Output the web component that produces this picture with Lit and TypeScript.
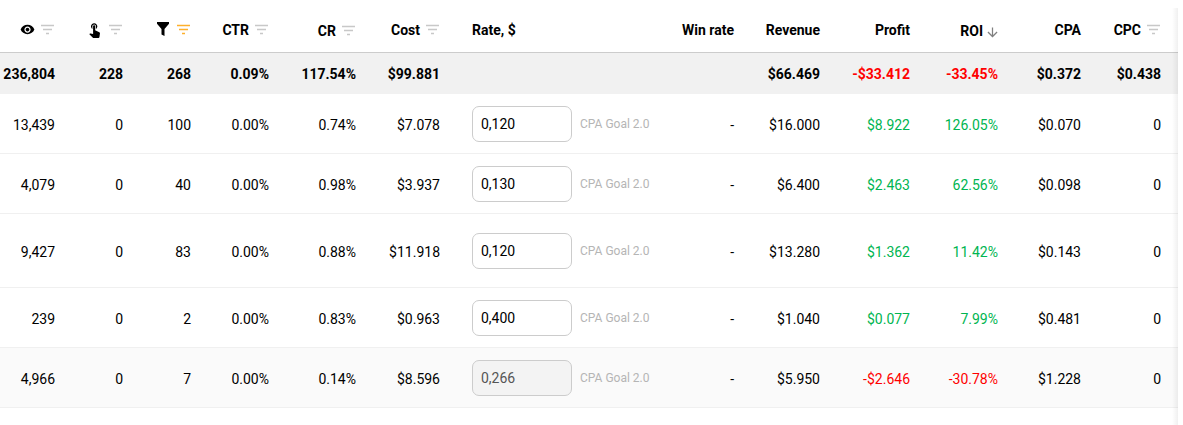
import { LitElement, html, css, svg } from "lit";
import { customElement } from "lit/decorators.js";

const filterIcon = (stroke = "#c8c8c8") => html`<svg class="filter" width="13" height="10" viewBox="0 0 13 10"><path d="M0 .5h13M2 4.5h9M5 8.5h3" fill="none" stroke=${stroke} stroke-width="1.4"/></svg>`;
const mat = (d: string, cls: string, size: number) => html`<svg class=${cls} width=${size} height=${size} viewBox="0 0 24 24">${svg`<path d=${d} fill="currentColor"/>`}</svg>`;
const EYE = "M12 4.5C7 4.5 2.73 7.61 1 12c1.73 4.39 6 7.5 11 7.5s9.27-3.11 11-7.5c-1.73-4.39-6-7.5-11-7.5zM12 17c-2.76 0-5-2.24-5-5s2.24-5 5-5 5 2.24 5 5-2.24 5-5 5zm0-8c-1.66 0-3 1.34-3 3s1.34 3 3 3 3-1.34 3-3-1.34-3-3-3z";
const TOUCH = "M9 11.24V7.5C9 6.12 10.12 5 11.5 5S14 6.12 14 7.5v3.74c1.21-.81 2-2.18 2-3.74C16 5.01 13.99 3 11.5 3S7 5.01 7 7.5c0 1.56.79 2.93 2 3.74zm9.84 4.63l-4.54-2.26c-.17-.07-.35-.11-.54-.11H13v-6c0-.83-.67-1.5-1.5-1.5S10 6.67 10 7.5v10.74l-3.43-.72c-.08-.01-.15-.03-.24-.03-.31 0-.59.13-.79.33l-.79.8 4.94 4.94c.27.27.65.44 1.06.44h6.79c.75 0 1.33-.55 1.44-1.28l.75-5.27c.01-.07.02-.14.02-.2 0-.62-.38-1.16-.91-1.38z";
const ARROW = "M20 12l-1.41-1.41L13 16.17V4h-2v12.17l-5.58-5.59L4 12l8 8 8-8z";
const funnel = html`<svg class="funnel" width="12" height="14" viewBox="0 0 12 14"><path d="M0 0h12v1.8L7.5 7v7L4.5 12.5V7L0 1.8z" fill="currentColor"/></svg>`;

const WIDTHS = [71, 68, 68, 78, 87, 84, 200, 94, 86, 90, 88, 83, 81];

interface Row {
  v: [string, string, string, string, string, string];
  rate: string;
  rev: string;
  profit: string;
  roi: string;
  cpa: string;
  neg?: boolean;
  cls?: string;
}

const ROWS: Row[] = [
  { v: ["13,439", "0", "100", "0.00%", "0.74%", "$7.078"], rate: "0,120", rev: "$16.000", profit: "$8.922", roi: "126.05%", cpa: "$0.070" },
  { v: ["4,079", "0", "40", "0.00%", "0.98%", "$3.937"], rate: "0,130", rev: "$6.400", profit: "$2.463", roi: "62.56%", cpa: "$0.098" },
  { v: ["9,427", "0", "83", "0.00%", "0.88%", "$11.918"], rate: "0,120", rev: "$13.280", profit: "$1.362", roi: "11.42%", cpa: "$0.143", cls: "tall" },
  { v: ["239", "0", "2", "0.00%", "0.83%", "$0.963"], rate: "0,400", rev: "$1.040", profit: "$0.077", roi: "7.99%", cpa: "$0.481" },
  { v: ["4,966", "0", "7", "0.00%", "0.14%", "$8.596"], rate: "0,266", rev: "$5.950", profit: "-$2.646", roi: "-30.78%", cpa: "$1.228", neg: true, cls: "off" },
];

@customElement("app-root")
export class AppRoot extends LitElement {
  static styles = css`
    :host { display: block; width: 1183px; height: 425px; overflow: hidden; background: #fff; font-family: Roboto, "Liberation Sans", sans-serif; font-size: 14px; color: #000; }
    .wrap { width: 1178px; position: relative; }
    .wrap::after { content: ""; position: absolute; top: 8px; bottom: -30px; right: 0; width: 6px; background: linear-gradient(to right, rgba(0,0,0,0), rgba(0,0,0,.06)); }
    table { border-collapse: collapse; table-layout: fixed; width: 1178px; }
    th, td { padding: 0 16px 0 0; text-align: right; white-space: nowrap; box-sizing: border-box; }
    th:last-child, td:last-child { padding-right: 17px; }
    th { height: 52px; font-weight: 700; border-bottom: 1px solid #ccc; padding-top: 9px; line-height: 16px; }
    th.low { padding-top: 11px; }
    .h { display: flex; justify-content: flex-end; align-items: center; gap: 6px; height: 16px; }
    .left { justify-content: flex-start; padding-left: 16px; }
    .gap8 { gap: 8px; }
    .gap2 { gap: 2px; }
    .filter { margin-right: 1px; overflow: visible; }
    .eye, .touch, .funnel { color: #000; margin-bottom: 2px; }
    .arrow { color: #808080; margin: 2px -2px 0 0; }
    .sum td { height: 42px; background: #f1f1f1; font-weight: 700; border-bottom: 0; padding-top: 1px; }
    tbody td { border-bottom: 1px solid #f0f0f0; }
    .r td { height: 60px; padding-top: 4px; }
    .sum + .r td { height: 59px; }
    .r.tall td { height: 74px; }
    .r.off td { background: #fafafa; }
    .r td.rate { text-align: left; padding: 2px 0 0 16px; }
    .rc { display: flex; align-items: center; gap: 8px; }
    .box { width: 100px; height: 36px; box-sizing: border-box; border: 1px solid #ccc; border-radius: 7px; padding: 0 8px; display: flex; align-items: center; font-size: 14px; background: #fff; }
    .off .box { background: #f3f3f3; color: #555; }
    .goal { font-size: 12px; color: #b5b5b5; }
    .g { color: #00b551; }
    .n { color: #f00; }
  `;

  render() {
    return html`<div class="wrap"><table>
      <colgroup>${WIDTHS.map((w) => html`<col width=${w} />`)}</colgroup>
      <thead><tr>
        <th><div class="h">${mat(EYE, "eye", 15)}${filterIcon()}</div></th>
        <th><div class="h">${mat(TOUCH, "touch", 17)}${filterIcon()}</div></th>
        <th><div class="h gap8">${funnel}${filterIcon("#fdb02c")}</div></th>
        <th><div class="h">CTR${filterIcon()}</div></th>
        <th class="low"><div class="h">CR${filterIcon()}</div></th>
        <th><div class="h">Cost${filterIcon()}</div></th>
        <th><div class="h left">Rate, $</div></th>
        <th>Win rate</th>
        <th>Revenue</th>
        <th>Profit</th>
        <th class="low"><div class="h gap2">ROI${mat(ARROW, "arrow", 15)}</div></th>
        <th>CPA</th>
        <th><div class="h">CPC${filterIcon()}</div></th>
      </tr></thead>
      <tbody>
        <tr class="sum">
          <td>236,804</td><td>228</td><td>268</td><td>0.09%</td><td>117.54%</td><td>$99.881</td>
          <td></td><td></td><td>$66.469</td><td class="n">-$33.412</td><td class="n">-33.45%</td><td>$0.372</td><td>$0.438</td>
        </tr>
        ${ROWS.map((r) => html`<tr class="r ${r.cls ?? ""}">
          ${r.v.map((x) => html`<td>${x}</td>`)}
          <td class="rate"><div class="rc"><div class="box">${r.rate}</div><span class="goal">CPA Goal 2.0</span></div></td>
          <td>-</td>
          <td>${r.rev}</td>
          <td class=${r.neg ? "n" : "g"}>${r.profit}</td>
          <td class=${r.neg ? "n" : "g"}>${r.roi}</td>
          <td>${r.cpa}</td>
          <td>0</td>
        </tr>`)}
      </tbody>
    </table></div>`;
  }
}
